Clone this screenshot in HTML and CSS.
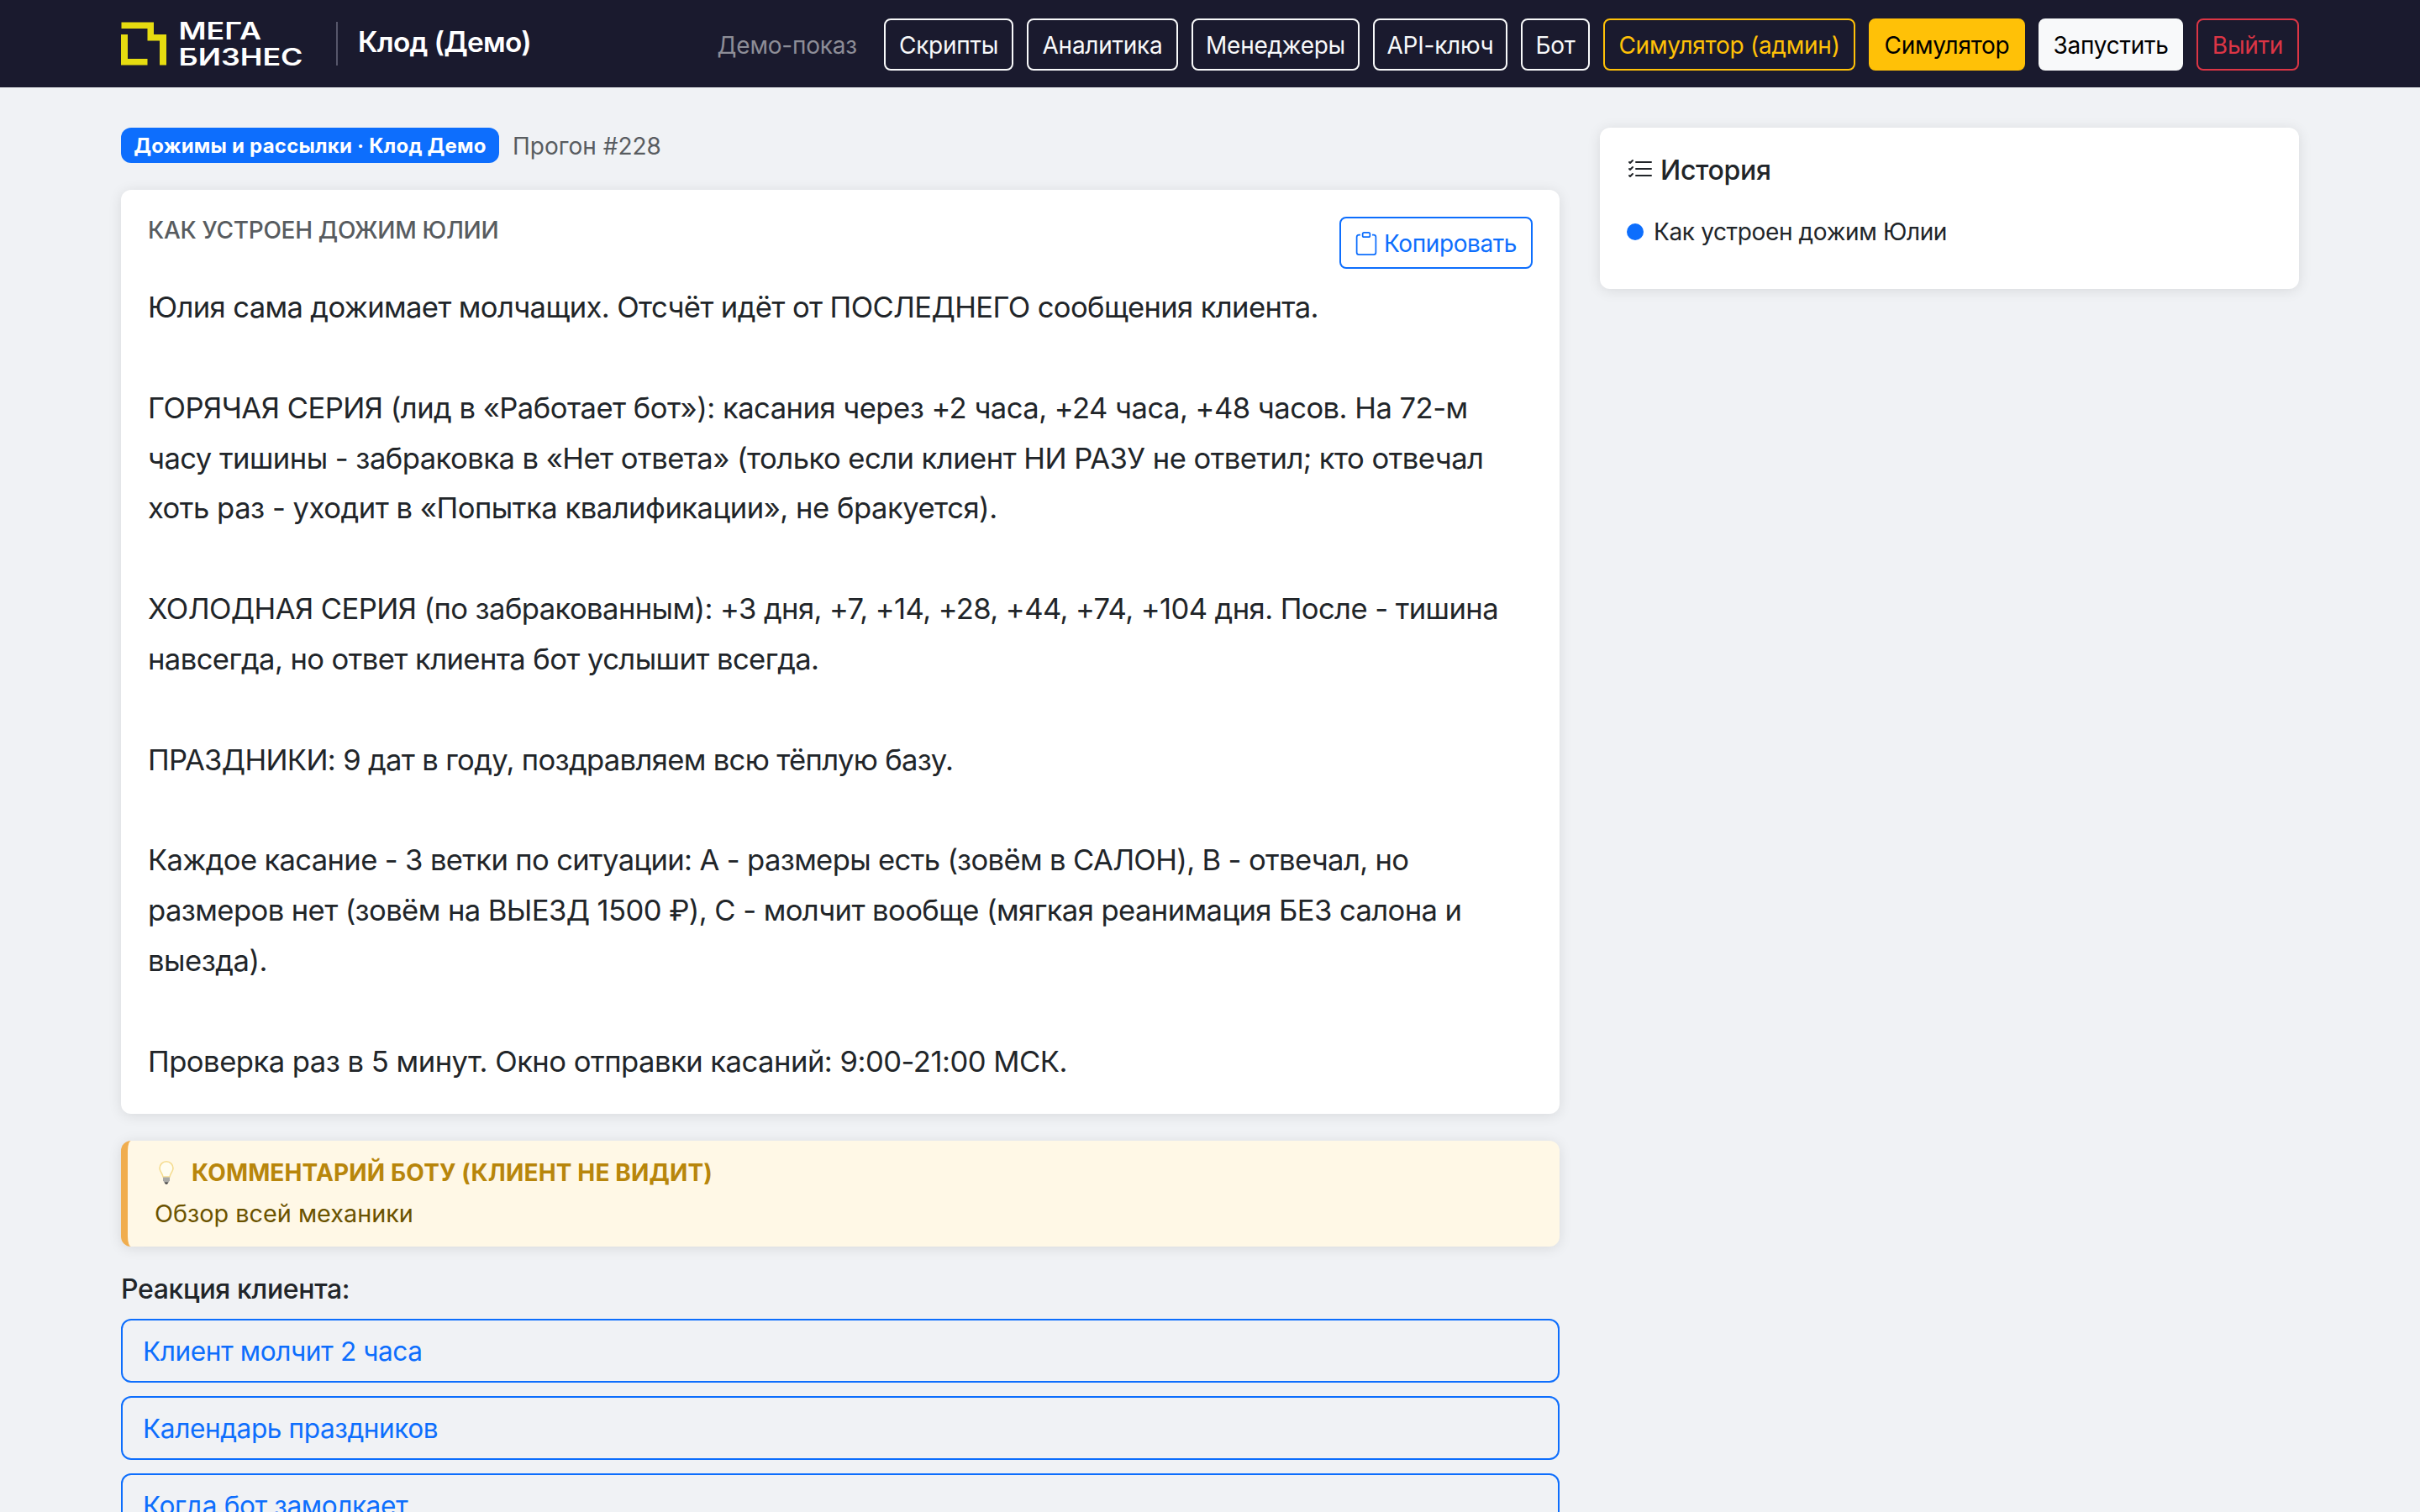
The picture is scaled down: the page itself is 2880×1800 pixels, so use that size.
FILE: index.html
```
<!DOCTYPE html>
<html lang="ru">
<head>
<meta charset="utf-8">
<title>Клод (Демо)</title>
<link rel="stylesheet" href="styles.css">
</head>
<body>
<header class="navbar">
  <div class="brand">
    <svg class="logo" width="222" height="64" viewBox="0 -6 222 64" role="img" aria-label="Мега Бизнес">
      <path fill="#e6dc10" d="M.5.5H39V15H54V51.500H46V22.500H31.500V8H.5zM0 15H8V44H31.500V51.500H0z"/>
      <text class="logo-text" x="68.500" y="21" textLength="98.500" lengthAdjust="spacingAndGlyphs">МЕГА</text>
      <text class="logo-text" x="68.500" y="51.500" textLength="148" lengthAdjust="spacingAndGlyphs">БИЗНЕС</text>
    </svg>
    <span class="brand-name">Клод (Демо)</span>
  </div>
  <nav class="nav">
    <span class="nav-user">Демо-показ</span>
    <a class="btn light">Скрипты</a>
    <a class="btn light">Аналитика</a>
    <a class="btn light">Менеджеры</a>
    <a class="btn light">API-ключ</a>
    <a class="btn light">Бот</a>
    <a class="btn warn">Симулятор (админ)</a>
    <a class="btn warn-fill">Симулятор</a>
    <a class="btn light-fill">Запустить</a>
    <a class="btn danger">Выйти</a>
  </nav>
</header>
<main class="page">
  <section class="main-col">
    <div class="run"><span class="badge">Дожимы и рассылки · Клод Демо</span><span class="run-id">Прогон #228</span></div>
    <article class="card script">
      <div class="script-head">
        <h6 class="script-title">КАК УСТРОЕН ДОЖИМ ЮЛИИ</h6>
        <button class="btn primary copy"><svg width="28" height="28" viewBox="0 0 16 16" fill="currentColor"><path d="M4 1.500H3a2 2 0 0 0-2 2V14a2 2 0 0 0 2 2h10a2 2 0 0 0 2-2V3.500a2 2 0 0 0-2-2h-1v1h1a1 1 0 0 1 1 1V14a1 1 0 0 1-1 1H3a1 1 0 0 1-1-1V3.500a1 1 0 0 1 1-1h1z"/><path d="M9.500 1a.5.5 0 0 1 .5.5v1a.5.5 0 0 1-.5.5h-3a.5.5 0 0 1-.5-.5v-1a.5.5 0 0 1 .5-.5zm-3-1A1.500 1.500 0 0 0 5 1.500v1A1.500 1.500 0 0 0 6.500 4h3A1.500 1.500 0 0 0 11 2.500v-1A1.500 1.500 0 0 0 9.500 0z"/></svg><span class="copy-label">Копировать</span></button>
      </div>
      <div class="script-text">
        <p><span class="ls-62">Юлия сама дожимает молчащих. Отсчёт идёт от ПОСЛЕДНЕГО сообщения клиента.</span></p>
        <p><span class="ls-52">ГОРЯЧАЯ СЕРИЯ (лид в «Работает бот»): касания через +2 часа, +24 часа, +48 часов. На 72-м</span><br>
        <span class="ls-53">часу тишины - забраковка в «Нет ответа» (только если клиент НИ РАЗУ не ответил; кто отвечал</span><br>
        <span class="ls-48">хоть раз - уходит в «Попытка квалификации», не бракуется).</span></p>
        <p><span class="ls-58">ХОЛОДНАЯ СЕРИЯ (по забракованным): +3 дня, +7, +14, +28, +44, +74, +104 дня. После - тишина</span><br>
        <span class="ls-58">навсегда, но ответ клиента бот услышит всегда.</span></p>
        <p><span class="ls-66">ПРАЗДНИКИ: 9 дат в году, поздравляем всю тёплую базу.</span></p>
        <p><span class="ls-64">Каждое касание - 3 ветки по ситуации: A - размеры есть (зовём в САЛОН), B - отвечал, но</span><br>
        <span class="ls-58">размеров нет (зовём на ВЫЕЗД 1500 ₽), C - молчит вообще (мягкая реанимация БЕЗ салона и</span><br>
        <span class="ls-48">выезда).</span></p>
        <p><span class="ls-50">Проверка раз в 5 минут. Окно отправки касаний: 9:00-21:00 МСК.</span></p>
      </div>
    </article>
    <aside class="card note">
      <div class="note-title">
        <svg class="bulb" width="18" height="28" viewBox="0 0 18 28"><path d="M9 .8a8 8 0 0 0-8 8c0 4 3.300 5.700 4 10.200h8c.7-4.500 4-6.200 4-10.200a8 8 0 0 0-8-8z" fill="#fffdf0" stroke="#f5dc90" stroke-width="1.600"/><path d="M5 19.500h8v4L11 26H7l-2-2.500z" fill="#a9a9a6"/><path d="M6.500 25.500h5L10 27.800H8z" fill="#444"/></svg>
        <span>КОММЕНТАРИЙ БОТУ (КЛИЕНТ НЕ ВИДИТ)</span>
      </div>
      <div class="note-text">Обзор всей механики</div>
    </aside>
    <h6 class="react-title">Реакция клиента:</h6>
    <div class="answers">
      <button class="answer">Клиент молчит 2 часа</button>
      <button class="answer">Календарь праздников</button>
      <button class="answer">Когда бот замолкает</button>
    </div>
  </section>
  <aside class="card history">
    <h6 class="history-title"><svg width="32" height="34" viewBox="0 0 16 17" fill="currentColor"><path fill-rule="evenodd" d="M5 11.500a.5.5 0 0 1 .5-.5h9a.5.5 0 0 1 0 1h-9a.5.5 0 0 1-.5-.5m0-4a.5.5 0 0 1 .5-.5h9a.5.5 0 0 1 0 1h-9a.5.5 0 0 1-.5-.5m0-4a.5.5 0 0 1 .5-.5h9a.5.5 0 0 1 0 1h-9a.5.5 0 0 1-.5-.5M3.854 2.146a.5.5 0 0 1 0 .708l-1.500 1.500a.5.5 0 0 1-.708 0l-.5-.5a.5.5 0 1 1 .708-.708L2 3.293l1.146-1.147a.5.5 0 0 1 .708 0m0 4a.5.5 0 0 1 0 .708l-1.500 1.500a.5.5 0 0 1-.708 0l-.5-.5a.5.5 0 1 1 .708-.708L2 7.293l1.146-1.147a.5.5 0 0 1 .708 0m0 4a.5.5 0 0 1 0 .708l-1.500 1.500a.5.5 0 0 1-.708 0l-.5-.5a.5.5 0 0 1 .708-.708l.146.147 1.146-1.147a.5.5 0 0 1 .708 0"/></svg>История</h6>
    <div class="history-item"><i class="dot"></i>Как устроен дожим Юлии</div>
  </aside>
</main>
</body>
</html>
```
FILE: styles.css
```
* { box-sizing: border-box; }
html, body { height: 100%; overflow: hidden; }
body { margin: 0; background: #f0f2f5; color: #212529; font: 400 32px/1.5 Inter, "Liberation Sans", sans-serif; }
h6, p { margin: 0; }
button { font: inherit; background: none; text-align: left; }
svg { display: block; flex: none; }

.navbar { height: 104px; padding: 0 144px; background: #1a1a2e; display: flex; align-items: center; justify-content: space-between; }
.brand { display: flex; align-items: center; gap: 34px; }
.logo { overflow: visible; }
.logo-text { font-family: Inter, sans-serif; font-weight: 600; font-size: 28px; fill: #fff; }
.brand-name { border-left: 2px solid #56566a; height: 52px; padding-left: 24px; font-size: 33.400px; font-weight: 600; letter-spacing: -.7px; line-height: 48px; color: #fff; }
.nav { display: grid; grid-template-columns: auto 154px 180px 200px 160px 82px 300px 186px 172px 122px; align-items: center; gap: 16px; padding-top: 2px; }
.nav-user { font-size: 28px; letter-spacing: -.2px; line-height: 44px; padding-top: 2px; color: #8d8d97; margin-right: 16px; }
.btn { height: 62px; border: 2px solid; border-radius: 8px; padding: 1px 0 0; font-size: 28px; letter-spacing: -.25px; line-height: 59px; text-align: center; white-space: nowrap; }
.light { color: #f8f9fa; }
.warn { color: #ffc107; }
.warn-fill { background: #ffc107; border-color: #ffc107; color: #000; }
.light-fill { background: #f8f9fa; border-color: #f8f9fa; color: #000; }
.danger { color: #dc3545; }
.primary { color: #0d6efd; }

.page { display: grid; grid-template-columns: 1712px 832px; gap: 48px; padding: 48px 144px 0; align-items: start; }
.card { background: #fff; border-radius: 12px; box-shadow: 0 2px 16px rgba(0, 0, 0, .1); }
.run { display: flex; align-items: center; height: 42px; gap: 16px; }
.badge { width: 450px; height: 42px; border-radius: 12px; background: #0d6efd; color: #fff; font-size: 24px; font-weight: 700; letter-spacing: .22px; line-height: 43px; text-align: center; white-space: nowrap; }
.run-id { font-size: 28px; color: #585c60; line-height: 44px; padding-top: 1px; }

.script { margin-top: 32px; padding: 32px; height: 1100px; }
.script-head { display: flex; justify-content: space-between; margin-bottom: 16px; }
.script-title { font-size: 28px; font-weight: 500; letter-spacing: -.3px; line-height: 33px; color: #585c60; }
.copy { display: flex; align-items: center; gap: 7px; width: 230px; padding-left: 16px; letter-spacing: -.4px; }
.copy-label { padding-top: 2px; line-height: 57px; }
.script-text { display: flex; flex-direction: column; gap: 59.840px; font-size: 34.600px; line-height: 59.840px; white-space: nowrap; }
.ls-48 { letter-spacing: -.48px; }
.ls-50 { letter-spacing: -.5px; }
.ls-52 { letter-spacing: -.52px; }
.ls-53 { letter-spacing: -.535px; }
.ls-58 { letter-spacing: -.58px; }
.ls-62 { letter-spacing: -.625px; }
.ls-64 { letter-spacing: -.645px; }
.ls-66 { letter-spacing: -.665px; }

.note { margin-top: 32px; height: 126px; padding: 16px 32px; border-left: 8px solid #f0ad4e; background: #fff8e6; }
.note-title { display: flex; align-items: center; gap: 21px; height: 44px; font-size: 28px; font-weight: 700; letter-spacing: .15px; color: #b8860b; }
.bulb { margin-left: 5px; }
.note-text { font-size: 28.800px; line-height: 54px; color: #6b5300; }
.react-title { margin-top: 32px; font-size: 32px; font-weight: 500; letter-spacing: -.35px; line-height: 38px; }
.answers { display: flex; flex-direction: column; gap: 16px; margin-top: 16px; }
.answer { height: 76px; border: 2px solid #0d6efd; border-radius: 12px; color: #0d6efd; padding: 1px 24px 0; font-size: 31.600px; letter-spacing: -.42px; }

.history { height: 192px; padding: 32px; }
.history-title { display: flex; align-items: center; gap: 8px; font-size: 32px; font-weight: 500; letter-spacing: -.3px; line-height: 38px; }
.history-item { display: flex; align-items: center; gap: 12px; margin-top: 32px; font-size: 28px; letter-spacing: -.36px; line-height: 44px; }
.dot { width: 20px; height: 20px; border-radius: 50%; background: #0d6efd; }
```
